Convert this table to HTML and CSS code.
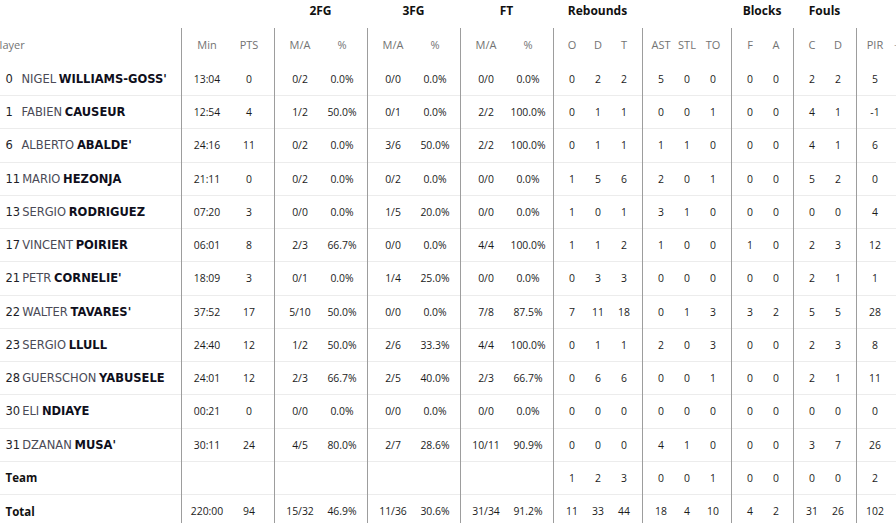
FILE: index.html
```html
<!DOCTYPE html>
<html lang="en">
<head>
<meta charset="utf-8">
<title>Box score</title>
<link rel="stylesheet" href="styles.css">
</head>
<body>
<div class="page">
  <div class="box">
    <div class="row groups">
      <div class="g"></div>
      <div class="g sp2"></div>
      <div class="g sp2">2FG</div>
      <div class="g sp2">3FG</div>
      <div class="g sp2">FT</div>
      <div class="g sp3">Rebounds</div>
      <div class="g sp3"></div>
      <div class="g sp2">Blocks</div>
      <div class="g sp2">Fouls</div>
      <div class="g sp2"></div>
    </div>

    <div class="row head">
      <div class="c pl">Player</div>
      <div class="c s4">Min</div><div class="c e4">PTS</div>
      <div class="c s4">M/A</div><div class="c e4">%</div>
      <div class="c s4">M/A</div><div class="c e4">%</div>
      <div class="c s4">M/A</div><div class="c e4">%</div>
      <div class="c s5">O</div><div class="c">D</div><div class="c e5">T</div>
      <div class="c s5">AST</div><div class="c">STL</div><div class="c e5">TO</div>
      <div class="c s5">F</div><div class="c e4">A</div>
      <div class="c s5">C</div><div class="c e5">D</div>
      <div class="c s5">PIR</div><div class="c pm">+/-</div>
    </div>

    <div class="row r">
      <div class="c pl"><span class="num">0</span><span class="first">NIGEL</span>&nbsp;<span class="last">WILLIAMS-GOSS'</span></div>
      <div class="c s4">13:04</div><div class="c e4">0</div>
      <div class="c s4">0/2</div><div class="c e4">0.0%</div>
      <div class="c s4">0/0</div><div class="c e4">0.0%</div>
      <div class="c s4">0/0</div><div class="c e4">0.0%</div>
      <div class="c s5">0</div><div class="c">2</div><div class="c e5">2</div>
      <div class="c s5">5</div><div class="c">0</div><div class="c e5">0</div>
      <div class="c s5">0</div><div class="c e4">0</div>
      <div class="c s5">2</div><div class="c e5">2</div>
      <div class="c s5">5</div><div class="c pm"></div>
    </div>

    <div class="row r">
      <div class="c pl"><span class="num">1</span><span class="first">FABIEN</span>&nbsp;<span class="last">CAUSEUR</span></div>
      <div class="c s4">12:54</div><div class="c e4">4</div>
      <div class="c s4">1/2</div><div class="c e4">50.0%</div>
      <div class="c s4">0/1</div><div class="c e4">0.0%</div>
      <div class="c s4">2/2</div><div class="c e4">100.0%</div>
      <div class="c s5">0</div><div class="c">1</div><div class="c e5">1</div>
      <div class="c s5">0</div><div class="c">0</div><div class="c e5">1</div>
      <div class="c s5">0</div><div class="c e4">0</div>
      <div class="c s5">4</div><div class="c e5">1</div>
      <div class="c s5">-1</div><div class="c pm"></div>
    </div>

    <div class="row r">
      <div class="c pl"><span class="num">6</span><span class="first">ALBERTO</span>&nbsp;<span class="last">ABALDE'</span></div>
      <div class="c s4">24:16</div><div class="c e4">11</div>
      <div class="c s4">0/2</div><div class="c e4">0.0%</div>
      <div class="c s4">3/6</div><div class="c e4">50.0%</div>
      <div class="c s4">2/2</div><div class="c e4">100.0%</div>
      <div class="c s5">0</div><div class="c">1</div><div class="c e5">1</div>
      <div class="c s5">1</div><div class="c">1</div><div class="c e5">0</div>
      <div class="c s5">0</div><div class="c e4">0</div>
      <div class="c s5">4</div><div class="c e5">1</div>
      <div class="c s5">6</div><div class="c pm"></div>
    </div>

    <div class="row r">
      <div class="c pl"><span class="num">11</span><span class="first">MARIO</span>&nbsp;<span class="last">HEZONJA</span></div>
      <div class="c s4">21:11</div><div class="c e4">0</div>
      <div class="c s4">0/2</div><div class="c e4">0.0%</div>
      <div class="c s4">0/2</div><div class="c e4">0.0%</div>
      <div class="c s4">0/0</div><div class="c e4">0.0%</div>
      <div class="c s5">1</div><div class="c">5</div><div class="c e5">6</div>
      <div class="c s5">2</div><div class="c">0</div><div class="c e5">1</div>
      <div class="c s5">0</div><div class="c e4">0</div>
      <div class="c s5">5</div><div class="c e5">2</div>
      <div class="c s5">0</div><div class="c pm"></div>
    </div>

    <div class="row r">
      <div class="c pl"><span class="num">13</span><span class="first">SERGIO</span>&nbsp;<span class="last">RODRIGUEZ</span></div>
      <div class="c s4">07:20</div><div class="c e4">3</div>
      <div class="c s4">0/0</div><div class="c e4">0.0%</div>
      <div class="c s4">1/5</div><div class="c e4">20.0%</div>
      <div class="c s4">0/0</div><div class="c e4">0.0%</div>
      <div class="c s5">1</div><div class="c">0</div><div class="c e5">1</div>
      <div class="c s5">3</div><div class="c">1</div><div class="c e5">0</div>
      <div class="c s5">0</div><div class="c e4">0</div>
      <div class="c s5">0</div><div class="c e5">0</div>
      <div class="c s5">4</div><div class="c pm"></div>
    </div>

    <div class="row r">
      <div class="c pl"><span class="num">17</span><span class="first">VINCENT</span>&nbsp;<span class="last">POIRIER</span></div>
      <div class="c s4">06:01</div><div class="c e4">8</div>
      <div class="c s4">2/3</div><div class="c e4">66.7%</div>
      <div class="c s4">0/0</div><div class="c e4">0.0%</div>
      <div class="c s4">4/4</div><div class="c e4">100.0%</div>
      <div class="c s5">1</div><div class="c">1</div><div class="c e5">2</div>
      <div class="c s5">1</div><div class="c">0</div><div class="c e5">0</div>
      <div class="c s5">1</div><div class="c e4">0</div>
      <div class="c s5">2</div><div class="c e5">3</div>
      <div class="c s5">12</div><div class="c pm"></div>
    </div>

    <div class="row r">
      <div class="c pl"><span class="num">21</span><span class="first">PETR</span>&nbsp;<span class="last">CORNELIE'</span></div>
      <div class="c s4">18:09</div><div class="c e4">3</div>
      <div class="c s4">0/1</div><div class="c e4">0.0%</div>
      <div class="c s4">1/4</div><div class="c e4">25.0%</div>
      <div class="c s4">0/0</div><div class="c e4">0.0%</div>
      <div class="c s5">0</div><div class="c">3</div><div class="c e5">3</div>
      <div class="c s5">0</div><div class="c">0</div><div class="c e5">0</div>
      <div class="c s5">0</div><div class="c e4">0</div>
      <div class="c s5">2</div><div class="c e5">1</div>
      <div class="c s5">1</div><div class="c pm"></div>
    </div>

    <div class="row r">
      <div class="c pl"><span class="num">22</span><span class="first">WALTER</span>&nbsp;<span class="last">TAVARES'</span></div>
      <div class="c s4">37:52</div><div class="c e4">17</div>
      <div class="c s4">5/10</div><div class="c e4">50.0%</div>
      <div class="c s4">0/0</div><div class="c e4">0.0%</div>
      <div class="c s4">7/8</div><div class="c e4">87.5%</div>
      <div class="c s5">7</div><div class="c">11</div><div class="c e5">18</div>
      <div class="c s5">0</div><div class="c">1</div><div class="c e5">3</div>
      <div class="c s5">3</div><div class="c e4">2</div>
      <div class="c s5">5</div><div class="c e5">5</div>
      <div class="c s5">28</div><div class="c pm"></div>
    </div>

    <div class="row r">
      <div class="c pl"><span class="num">23</span><span class="first">SERGIO</span>&nbsp;<span class="last">LLULL</span></div>
      <div class="c s4">24:40</div><div class="c e4">12</div>
      <div class="c s4">1/2</div><div class="c e4">50.0%</div>
      <div class="c s4">2/6</div><div class="c e4">33.3%</div>
      <div class="c s4">4/4</div><div class="c e4">100.0%</div>
      <div class="c s5">0</div><div class="c">1</div><div class="c e5">1</div>
      <div class="c s5">2</div><div class="c">0</div><div class="c e5">3</div>
      <div class="c s5">0</div><div class="c e4">0</div>
      <div class="c s5">2</div><div class="c e5">3</div>
      <div class="c s5">8</div><div class="c pm"></div>
    </div>

    <div class="row r">
      <div class="c pl"><span class="num">28</span><span class="first">GUERSCHON</span>&nbsp;<span class="last">YABUSELE</span></div>
      <div class="c s4">24:01</div><div class="c e4">12</div>
      <div class="c s4">2/3</div><div class="c e4">66.7%</div>
      <div class="c s4">2/5</div><div class="c e4">40.0%</div>
      <div class="c s4">2/3</div><div class="c e4">66.7%</div>
      <div class="c s5">0</div><div class="c">6</div><div class="c e5">6</div>
      <div class="c s5">0</div><div class="c">0</div><div class="c e5">1</div>
      <div class="c s5">0</div><div class="c e4">0</div>
      <div class="c s5">2</div><div class="c e5">1</div>
      <div class="c s5">11</div><div class="c pm"></div>
    </div>

    <div class="row r">
      <div class="c pl"><span class="num">30</span><span class="first">ELI</span>&nbsp;<span class="last">NDIAYE</span></div>
      <div class="c s4">00:21</div><div class="c e4">0</div>
      <div class="c s4">0/0</div><div class="c e4">0.0%</div>
      <div class="c s4">0/0</div><div class="c e4">0.0%</div>
      <div class="c s4">0/0</div><div class="c e4">0.0%</div>
      <div class="c s5">0</div><div class="c">0</div><div class="c e5">0</div>
      <div class="c s5">0</div><div class="c">0</div><div class="c e5">0</div>
      <div class="c s5">0</div><div class="c e4">0</div>
      <div class="c s5">0</div><div class="c e5">0</div>
      <div class="c s5">0</div><div class="c pm"></div>
    </div>

    <div class="row r">
      <div class="c pl"><span class="num">31</span><span class="first">DZANAN</span>&nbsp;<span class="last">MUSA'</span></div>
      <div class="c s4">30:11</div><div class="c e4">24</div>
      <div class="c s4">4/5</div><div class="c e4">80.0%</div>
      <div class="c s4">2/7</div><div class="c e4">28.6%</div>
      <div class="c s4">10/11</div><div class="c e4">90.9%</div>
      <div class="c s5">0</div><div class="c">0</div><div class="c e5">0</div>
      <div class="c s5">4</div><div class="c">1</div><div class="c e5">0</div>
      <div class="c s5">0</div><div class="c e4">0</div>
      <div class="c s5">3</div><div class="c e5">7</div>
      <div class="c s5">26</div><div class="c pm"></div>
    </div>

    <div class="row r">
      <div class="c pl"><span class="tt">Team</span></div>
      <div class="c s4"></div><div class="c e4"></div>
      <div class="c s4"></div><div class="c e4"></div>
      <div class="c s4"></div><div class="c e4"></div>
      <div class="c s4"></div><div class="c e4"></div>
      <div class="c s5">1</div><div class="c">2</div><div class="c e5">3</div>
      <div class="c s5">0</div><div class="c">0</div><div class="c e5">1</div>
      <div class="c s5">0</div><div class="c e4">0</div>
      <div class="c s5">0</div><div class="c e5">0</div>
      <div class="c s5">2</div><div class="c pm"></div>
    </div>

    <div class="row r">
      <div class="c pl"><span class="tt">Total</span></div>
      <div class="c s4">220:00</div><div class="c e4">94</div>
      <div class="c s4">15/32</div><div class="c e4">46.9%</div>
      <div class="c s4">11/36</div><div class="c e4">30.6%</div>
      <div class="c s4">31/34</div><div class="c e4">91.2%</div>
      <div class="c s5">11</div><div class="c">33</div><div class="c e5">44</div>
      <div class="c s5">18</div><div class="c">4</div><div class="c e5">10</div>
      <div class="c s5">4</div><div class="c e4">2</div>
      <div class="c s5">31</div><div class="c e5">26</div>
      <div class="c s5">102</div><div class="c pm"></div>
    </div>
  </div>
</div>
</body>
</html>
```

FILE: styles.css
```css
html, body {
  margin: 0;
  padding: 0;
  background: #ffffff;
  overflow: hidden;
}

.page {
  width: 896px;
  height: 523px;
  overflow: hidden;
}

.box {
  margin-left: -14px;
  width: max-content;
  font-family: "Open Sans", "Liberation Sans", sans-serif;
}

.row {
  display: grid;
  grid-template-columns: 195px 47px 46px 47px 46px 47px 46px 47px 46px 32px 26px 31px 32px 26px 31px 32px 30px 32px 31px 32px 26px;
}

.groups {
  height: 28px;
}

.g {
  display: flex;
  justify-content: center;
  align-items: flex-start;
  padding-top: 2px;
  font-size: 12px;
  font-weight: 700;
  color: #111111;
  white-space: nowrap;
}

.sp2 { grid-column: span 2; }
.sp3 { grid-column: span 3; }

.head {
  height: 34.75px;
}

.r {
  height: 33.25px;
  box-shadow: inset 0 -1px 0 #ececec;
}

.c {
  display: flex;
  align-items: center;
  justify-content: center;
  box-sizing: border-box;
  white-space: nowrap;
  font-size: 10.4px;
  color: #1b1b1b;
  padding-bottom: 1px;
}

.head .c {
  font-size: 11px;
  color: #737373;
}

.s4 {
  border-left: 1px solid #9d9d9d;
  padding-left: 4px;
}

.s5 {
  border-left: 1px solid #9d9d9d;
  padding-left: 5px;
}

.e4 { padding-right: 4px; }
.e5 { padding-right: 5px; }

.pl {
  justify-content: flex-start;
  padding-left: 19.5px;
}

.head .pl {
  padding-left: 7px;
}

.pm {
  justify-content: flex-start;
  padding-left: 6px;
}

.num {
  font-family: "DejaVu Sans", sans-serif;
  font-size: 11.5px;
  color: #1e1e28;
  min-width: 14px;
  margin-right: 2px;
}

.first {
  font-family: "DejaVu Sans", sans-serif;
  font-size: 11.5px;
  color: #4a4a56;
}

.last {
  font-family: "DejaVu Sans", sans-serif;
  font-size: 11.5px;
  font-weight: 700;
  color: #0f0f1c;
}

.tt {
  font-size: 11.5px;
  font-weight: 700;
  color: #111111;
}
```
